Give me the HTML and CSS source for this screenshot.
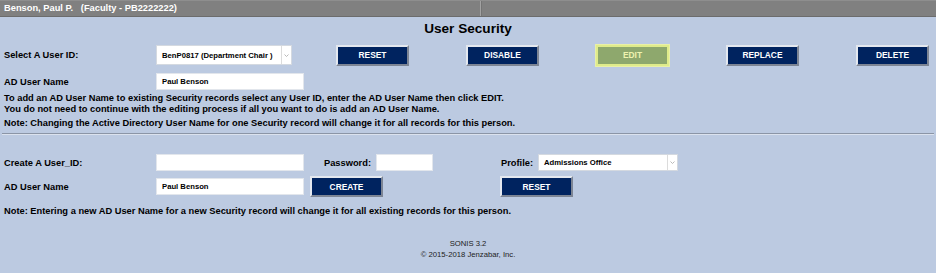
FILE: index.html
```html
<!DOCTYPE html>
<html lang="en">
<head>
  <meta charset="UTF-8" />
  <title>User Security</title>
  <link rel="stylesheet" href="styles.css">
</head>
<body>
  <div class="topbar">
    <div class="who">Benson, Paul P. &nbsp;&nbsp;(Faculty - PB2222222)</div>
    <div class="rest"></div>
  </div>

  <div class="page">
    <h1>User Security</h1>

    <div class="row row-select">
      <div class="lbl">Select A User ID:</div>
      <div class="select sel-user">
        <span class="val">BenP0817 (Department Chair )</span>
        <span class="arrow"><svg width="5" height="3" viewBox="0 0 5 3"><path d="M0.5 0.5 L2.5 2.5 L4.5 0.5" fill="none" stroke="#a8a8a8" stroke-width="0.8"/></svg></span>
      </div>
      <div class="actions">
        <button class="btn">RESET</button>
        <button class="btn">DISABLE</button>
        <button class="btn btn-edit">EDIT</button>
        <button class="btn">REPLACE</button>
        <button class="btn">DELETE</button>
      </div>
    </div>

    <div class="row row-ad">
      <div class="lbl">AD User Name</div>
      <div class="input wide">Paul Benson</div>
    </div>

    <div class="help">
      <p>To add an AD User Name to existing Security records select any User ID, enter the AD User Name then click EDIT.<br>
      You do not need to continue with the editing process if all you want to do is add an AD User Name.</p>
      <p class="note">Note: Changing the Active Directory User Name for one Security record will change it for all records for this person.</p>
    </div>

    <hr class="sep">

    <div class="create">
      <div class="lbl">Create A User_ID:</div>
      <div class="input wide"></div>
      <div class="pw">
        <span class="lbl">Password:</span>
        <div class="input short"></div>
      </div>
      <div class="profile">
        <span class="lbl">Profile:</span>
        <div class="select sel-profile">
          <span class="val">Admissions Office</span>
          <span class="arrow"><svg width="5" height="3" viewBox="0 0 5 3"><path d="M0.5 0.5 L2.5 2.5 L4.5 0.5" fill="none" stroke="#a8a8a8" stroke-width="0.8"/></svg></span>
        </div>
      </div>

      <div class="lbl">AD User Name</div>
      <div class="input wide">Paul Benson</div>
      <div class="cell-create"><button class="btn">CREATE</button></div>
      <div><button class="btn">RESET</button></div>
    </div>

    <p class="note note-create">Note: Entering a new AD User Name for a new Security record will change it for all existing records for this person.</p>

    <div class="footer">
      SONIS 3.2<br>
      &copy; 2015-2018 Jenzabar, Inc.
    </div>
  </div>
</body>
</html>
```

FILE: styles.css
```css
body {
  margin: 0;
  padding: 0;
  font-family: 'Liberation Sans', Arial, sans-serif;
  background-color: #bccae1;
  color: #000;
  height: 273px;
  overflow: hidden;
}

.topbar {
  display: flex;
  height: 15px;
  background: #808080;
  border-top: 1px solid #8e8e8e;
  border-bottom: 1px solid #6c6c6c;
}

.topbar .who {
  width: 476px;
  padding-left: 4px;
  border-right: 1px solid #a2a2a2;
  color: #fff;
  font-weight: bold;
  font-size: 9.3px;
  line-height: 14px;
  white-space: pre;
}

.topbar .rest {
  flex: 1;
  border-left: 1px solid #747474;
}

.page {
  padding: 0 4px;
}

h1 {
  margin: 0;
  height: 26px;
  line-height: 24px;
  font-size: 13.6px;
  text-align: center;
}

.row {
  display: flex;
  align-items: center;
}

.lbl {
  font-weight: bold;
  font-size: 9.3px;
}

.row .lbl,
.create > .lbl {
  width: 152px;
}

.row-select {
  height: 22px;
  margin-top: 1px;
}

.row-ad {
  height: 17px;
  margin-top: 7px;
}

.select {
  display: flex;
  align-items: stretch;
  background: #fff;
  border: 1px solid #d4d9e0;
  box-sizing: border-box;
  font-weight: bold;
  font-size: 7.7px;
}

.select .val {
  flex: 1;
  padding-left: 5px;
  display: flex;
  align-items: center;
  white-space: nowrap;
  overflow: hidden;
}

.select .arrow {
  width: 9px;
  border-left: 1px solid #dcdcdc;
  display: flex;
  align-items: center;
  justify-content: center;
}

.sel-user {
  width: 136px;
  height: 20px;
}

.sel-profile {
  width: 140px;
  height: 17px;
}

.input {
  background: #fff;
  border: 1px solid #e2e6ec;
  box-sizing: border-box;
  height: 17px;
  padding-left: 5px;
  font-weight: bold;
  font-size: 7.7px;
  line-height: 15px;
}

.input.wide {
  width: 148px;
}

.input.short {
  width: 57px;
}

.actions {
  display: flex;
  gap: 57px;
  margin-left: 44px;
}

.btn {
  width: 73px;
  height: 21px;
  padding: 0;
  background: #00235f;
  color: #fff;
  font-family: 'Liberation Sans', Arial, sans-serif;
  font-weight: bold;
  font-size: 8.4px;
  border: 2px solid;
  border-color: #e4e8ef #7d8594 #7d8594 #e4e8ef;
  box-sizing: border-box;
}

.btn-edit {
  background: #8ea86d;
  color: #eef3b0;
  border: 2px solid #dfeb8a;
  box-shadow: 0 0 0 1px #e9f0a6;
}

.help p {
  margin: 0;
  font-weight: bold;
  font-size: 9.3px;
  line-height: 11px;
}

.help {
  margin-top: 3px;
}

.help .note {
  margin-top: 3px;
}

.sep {
  margin: 4px -2px 0;
  border: 0;
  border-top: 1px solid #8b95a6;
  border-bottom: 1px solid #dbe2ee;
  height: 0;
}

.create {
  display: grid;
  grid-template-columns: 152px 148px 196px auto;
  grid-template-rows: 17px 21px;
  row-gap: 5px;
  align-items: center;
  margin-top: 19px;
}

.create .pw {
  display: flex;
  align-items: center;
  gap: 5px;
  padding-left: 20px;
}

.create .profile {
  display: flex;
  align-items: center;
  gap: 5px;
  padding-left: 1px;
}

.cell-create {
  padding-left: 6px;
}

.note {
  font-weight: bold;
  font-size: 9.3px;
  line-height: 11px;
}

.note-create {
  margin: 9px 0 0;
}

.footer {
  margin-top: 21px;
  text-align: center;
  font-size: 7.7px;
  line-height: 11px;
  color: #222;
}
```
